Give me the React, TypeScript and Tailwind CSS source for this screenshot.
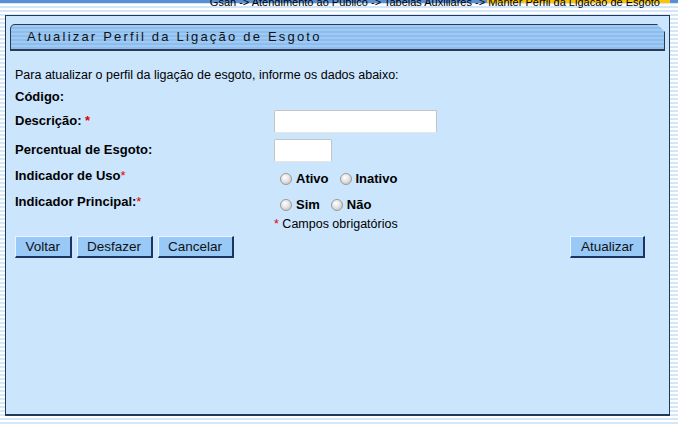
import React from 'react';

function Radio() {
  return (
    <span className="inline-block w-[12px] h-[12px] rounded-full border border-[#9a9a9a] bg-[radial-gradient(circle_at_40%_35%,#ffffff_0%,#e4e4e4_45%,#b8b8b8_100%)] align-middle" />
  );
}

function Btn({ label }: { label: string }) {
  return (
    <button
      type="button"
      className="h-[22px] px-[9.5px] bg-[#99c9f7] text-[13.5px] text-[#111] border border-t-[#e8f3ff] border-l-[#e8f3ff] border-b-[#1c3560] border-r-[#1c3560] border-b-2 border-r-2 leading-none"
    >
      {label}
    </button>
  );
}

export default function App() {
  return (
    <div className="w-[678px] h-[424px] overflow-hidden bg-[repeating-linear-gradient(to_bottom,#ffffff_0px,#ffffff_2px,#d3e7f8_2px,#d3e7f8_4px)] font-['Liberation_Sans',Arial,sans-serif] text-black">
      {/* top bar with breadcrumb */}
      <div className="relative h-[14px] overflow-hidden">
        <div className="flex h-[3px]">
          <div className="flex-1 bg-[#5b8fd3]" />
          <div className="w-[183px] bg-[#ffc400]" />
          <div className="w-[8px] bg-[#5b8fd3]" />
        </div>
        <div className="absolute right-[18px] top-[-3px] text-[11px] leading-none whitespace-nowrap">
          Gsan -&gt; Atendimento ao Publico -&gt; Tabelas Auxiliares -&gt; Manter Perfil da Ligacao de Esgoto
        </div>
      </div>

      {/* main panel */}
      <div className="mx-[5px] mt-[1px] w-[665px] h-[401px] bg-[#cbe5fd] border border-[#22395a] border-b-2 px-[4px] pt-[8px]">
        <div className="h-[27px] bg-[repeating-linear-gradient(to_bottom,#9ecaf4_0px,#9ecaf4_2px,#8dbdee_2px,#8dbdee_4px)] border border-[#2a3a52] border-b-2 rounded-tl-[5px] [clip-path:polygon(0_0,calc(100%-8px)_0,100%_8px,100%_100%,0_100%)] flex items-center pl-[16px]">
          <span className="text-[13px] tracking-[2.2px] text-[#111]">Atualizar Perfil da Ligação de Esgoto</span>
        </div>

        <div className="px-[5px] pt-[17px] text-[12.5px] leading-[14px]">
          <div>Para atualizar o perfil da ligação de esgoto, informe os dados abaixo:</div>
          <div className="mt-[8px] font-bold text-[13px]">Código:</div>

          <div className="flex items-center mt-[5px] h-[24px]">
            <div className="w-[259px] font-bold text-[13px]">
              Descrição: <span className="text-[#e00000]">*</span>
            </div>
            <div className="w-[163px] h-[23px] bg-white border border-[#c4c4c4] border-b-[#e6e6e6] rounded-[2px]" />
          </div>

          <div className="flex items-center mt-[5px] h-[24px]">
            <div className="w-[259px] font-bold text-[13px]">Percentual de Esgoto:</div>
            <div className="w-[58px] h-[23px] bg-white border border-[#c4c4c4] border-b-[#e6e6e6] rounded-[2px]" />
          </div>

          <div className="flex items-center mt-[5px] h-[22px]">
            <div className="w-[265px] font-bold text-[13px] self-start pt-[2px]">
              Indicador de Uso<span className="text-[#e00000] font-normal">*</span>
            </div>
            <div className="flex items-center gap-[4px] pt-[1px] text-[13px]">
              <Radio />
              <span className="font-bold">Ativo</span>
              <span className="w-[3px]" />
              <Radio />
              <span className="font-bold">Inativo</span>
            </div>
          </div>

          <div className="flex items-center mt-[4px] h-[22px]">
            <div className="w-[265px] font-bold text-[13px] self-start pt-[2px]">
              Indicador Principal:<span className="text-[#e00000] font-normal">*</span>
            </div>
            <div className="flex items-center gap-[4px] pt-[2px] text-[13px]">
              <Radio />
              <span className="font-bold">Sim</span>
              <span className="w-[3px]" />
              <Radio />
              <span className="font-bold">Não</span>
            </div>
          </div>

          <div className="mt-[2px] pl-[259px]">
            <span className="text-[#e00000]">*</span> Campos obrigatórios
          </div>

          <div className="flex items-center mt-[5px] pr-[15px]">
            <div className="flex gap-[5px]">
              <Btn label="Voltar" />
              <Btn label="Desfazer" />
              <Btn label="Cancelar" />
            </div>
            <div className="flex-1" />
            <Btn label="Atualizar" />
          </div>
        </div>
      </div>
    </div>
  );
}
